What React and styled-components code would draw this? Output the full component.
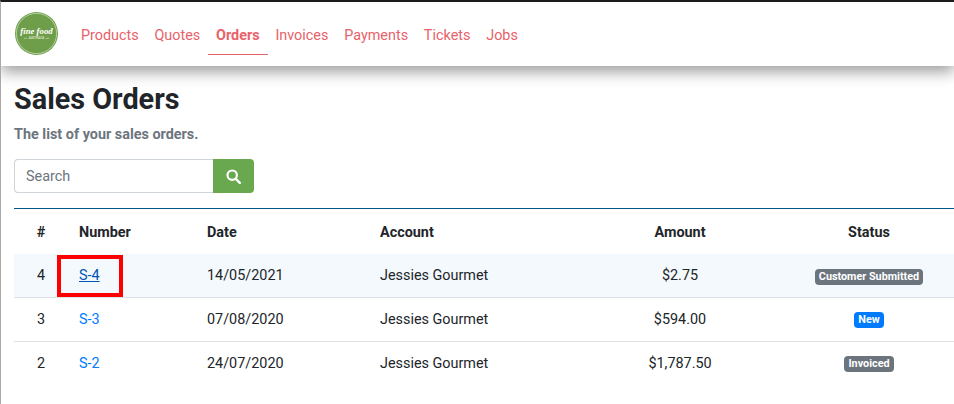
import React from "react";
import styled, { createGlobalStyle } from "styled-components";

const GlobalStyle = createGlobalStyle`
  html, body {
    margin: 0;
    padding: 0;
    background: #fff;
    height: 100%;
    overflow: hidden;
  }
  body {
    font-family: Roboto, "Liberation Sans", sans-serif;
    color: #212529;
  }
`;

const Page = styled.div`
  width: 954px;
  height: 404px;
  box-sizing: border-box;
  border-top: 2px solid #1c1c1c;
  border-left: 1px solid #a9a9a9;
  overflow: hidden;
  position: relative;
`;

const Navbar = styled.nav`
  height: 64px;
  display: flex;
  align-items: flex-start;
  padding-left: 14px;
  background: #fff;
  box-shadow: 0 6px 14px rgba(0, 0, 0, 0.38);
`;

const Logo = styled.svg`
  width: 43px;
  height: 43px;
  flex: none;
  margin: 10px 15px 0 0;
`;

const NavList = styled.div`
  display: flex;
`;

const NavLink = styled.a`
  display: flex;
  align-items: center;
  box-sizing: border-box;
  height: 53px;
  padding: 15px 7.9px 0;
  font-size: 14.4px;
  font-weight: ${p => (p.$active ? 700 : 400)};
  color: #e8626a;
  border-bottom: 1px solid ${p => (p.$active ? "#e8626a" : "transparent")};
`;

const Content = styled.main`
  padding: 0 0 0 13px;
`;

const Title = styled.h1`
  margin: 14px 0 0;
  font-size: 28.8px;
  line-height: 38px;
  font-weight: 700;
  color: #212529;
`;

const Subtitle = styled.p`
  margin: 7px 0 0;
  font-size: 14.4px;
  line-height: 20px;
  font-weight: 700;
  color: #6c757d;
`;

const SearchForm = styled.form`
  display: flex;
  margin-top: 14px;
  width: 240px;
  height: 34px;
`;

const SearchInput = styled.input`
  flex: 1;
  min-width: 0;
  box-sizing: border-box;
  height: 34px;
  padding: 0 11px;
  font: 400 14.4px Roboto, sans-serif;
  color: #495057;
  background: #fff;
  border: 1px solid #ced4da;
  border-right: none;
  border-radius: 4px 0 0 4px;
  outline: none;
  &::placeholder {
    color: #6c757d;
    opacity: 1;
  }
`;

const SearchButton = styled.button`
  width: 41px;
  flex: none;
  display: flex;
  align-items: center;
  justify-content: center;
  padding: 0;
  border: none;
  border-radius: 0 4px 4px 0;
  background: #6aa84f;
  color: #fff;
`;

const Table = styled.table`
  margin-top: 15px;
  width: 940px;
  table-layout: fixed;
  border-collapse: collapse;
  border-top: 1px solid #00558a;
  font-size: 14.4px;
`;

const Th = styled.th`
  height: 45px;
  padding: 2px 12px 0;
  box-sizing: border-box;
  font-weight: 700;
  color: #212529;
  text-align: ${p => p.$align || "left"};
  width: ${p => p.$width}px;
`;

const IndexTh = styled(Th)`
  padding-left: 13px;
`;

const Row = styled.tr`
  height: 44px;
  background: ${p => (p.$highlight ? "#f4f9fd" : "transparent")};
  border-top: ${p => (p.$highlight ? "none" : "1px solid #dee2e6")};
`;

const Td = styled.td`
  padding: ${p => (p.$first ? "1px 12px 0" : "0 12px 1px")};
  text-align: ${p => p.$align || "left"};
  color: #212529;
`;

const IndexTd = styled(Td)`
  padding-left: 13px;
`;

const OrderLink = styled.a`
  color: ${p => (p.$hover ? "#0056b3" : "#007bff")};
  text-decoration: ${p => (p.$hover ? "underline" : "none")};
`;

const Badge = styled.span`
  display: inline-block;
  margin-top: 2px;
  padding: 2px 4px;
  font-size: 10.8px;
  line-height: 12px;
  font-weight: 700;
  color: #fff;
  border-radius: 4px;
  vertical-align: middle;
  background: ${p => (p.$kind === "new" ? "#007bff" : "#6c757d")};
`;

const Callout = styled.div`
  position: absolute;
  left: 56px;
  top: 253px;
  width: 66px;
  height: 42px;
  box-sizing: border-box;
  border: 4px solid #f00;
`;

const orders = [
  { id: 4, number: "S-4", date: "14/05/2021", amount: "$2.75", status: "Customer Submitted", kind: "muted", highlight: true },
  { id: 3, number: "S-3", date: "07/08/2020", amount: "$594.00", status: "New", kind: "new" },
  { id: 2, number: "S-2", date: "24/07/2020", amount: "$1,787.50", status: "Invoiced", kind: "muted" },
];

const App = () => {
  return (
    <Page>
      <GlobalStyle />
      <Navbar>
        <Logo viewBox="0 0 44 44">
          <circle cx="22" cy="22" r="22" fill="#6f9e4b" />
          <circle cx="22" cy="22" r="20.6" fill="none" stroke="#e6efdc" strokeWidth="0.6" />
          <text x="22" y="23" textAnchor="middle" fill="#fff" fontFamily="Liberation Serif, serif" fontStyle="italic" fontWeight="700" fontSize="9">fine food</text>
          <text x="22" y="28" textAnchor="middle" fill="#e6efdc" fontFamily="Roboto, sans-serif" fontWeight="500" fontSize="3">AUSTRALIA</text>
          <path d="M9 27h3.5M31.5 27h3.5" stroke="#e6efdc" strokeWidth="0.5" />
        </Logo>
        <NavList>
          <NavLink>Products</NavLink>
          <NavLink>Quotes</NavLink>
          <NavLink $active>Orders</NavLink>
          <NavLink>Invoices</NavLink>
          <NavLink>Payments</NavLink>
          <NavLink>Tickets</NavLink>
          <NavLink>Jobs</NavLink>
        </NavList>
      </Navbar>
      <Content>
        <Title>Sales Orders</Title>
        <Subtitle>The list of your sales orders.</Subtitle>
        <SearchForm>
          <SearchInput placeholder="Search" />
          <SearchButton type="button">
            <svg width="15" height="15" viewBox="0 0 15 15" fill="none" stroke="currentColor">
              <circle cx="6.2" cy="6.2" r="4.7" strokeWidth="2.2" />
              <path d="M9.8 9.8l4 4" strokeWidth="2.4" strokeLinecap="round" />
            </svg>
          </SearchButton>
        </SearchForm>
        <Table>
          <thead>
            <tr>
              <IndexTh $width={53} $align="center">#</IndexTh>
              <Th $width={128}>Number</Th>
              <Th $width={173}>Date</Th>
              <Th $width={208}>Account</Th>
              <Th $width={208} $align="center">Amount</Th>
              <Th $width={170} $align="center">Status</Th>
            </tr>
          </thead>
          <tbody>
            {orders.map(order => (
              <Row key={order.id} $highlight={order.highlight}>
                <IndexTd $first={order.highlight} $align="center">{order.id}</IndexTd>
                <Td $first={order.highlight}><OrderLink $hover={order.highlight}>{order.number}</OrderLink></Td>
                <Td $first={order.highlight}>{order.date}</Td>
                <Td $first={order.highlight}>Jessies Gourmet</Td>
                <Td $first={order.highlight} $align="center">{order.amount}</Td>
                <Td $first={order.highlight} $align="center"><Badge $kind={order.kind}>{order.status}</Badge></Td>
              </Row>
            ))}
          </tbody>
        </Table>
      </Content>
      <Callout />
    </Page>
  );
};

export default App;
